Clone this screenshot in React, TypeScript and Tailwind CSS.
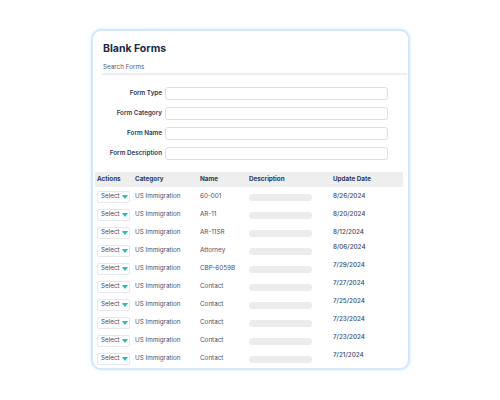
import React from "react";

const rows = [
  { name: "60-001", date: "8/26/2024", up: false },
  { name: "AR-11", date: "8/20/2024", up: false },
  { name: "AR-11SR", date: "8/12/2024", up: false },
  { name: "Attorney", date: "8/06/2024", up: true },
  { name: "CBP-6059B", date: "7/29/2024", up: true },
  { name: "Contact", date: "7/27/2024", up: true },
  { name: "Contact", date: "7/25/2024", up: true },
  { name: "Contact", date: "7/23/2024", up: true },
  { name: "Contact", date: "7/23/2024", up: true },
  { name: "Contact", date: "7/21/2024", up: true },
];

const fields = ["Form Type", "Form Category", "Form Name", "Form Description"];

export default function App() {
  return (
    <div
      className="w-[500px] h-[400px] bg-white pl-[91px] pt-[29px]"
      style={{ fontFamily: "Inter, 'Noto Sans', sans-serif" }}
    >
      <div className="w-[319px] h-[341px] rounded-[10px] border-2 border-[#d3e9fa] bg-white shadow-[0_0_3px_rgba(180,215,245,0.6)] pt-[11px] pr-[1px] flex flex-col">
        <div className="ml-[10px] text-[10.5px] leading-[14px] font-bold text-[#1c2847]">Blank Forms</div>
        <div className="ml-[9px] mt-[7px] pl-[1px] pb-[1px] border-b-2 border-[#eceef1] text-[6.3px] leading-[9px] text-[#4c5a7c]">
          Search Forms
        </div>
        <div className="mt-[12px] flex flex-col gap-[7px]">
          {fields.map((f) => (
            <div key={f} className="flex items-center">
              <div className="w-[69px] text-right text-[6.3px] font-semibold text-[#2f3a56]">{f}</div>
              <div className="ml-[3px] w-[223px] h-[13px] rounded-[3px] border border-[#dcdfe4] bg-white" />
            </div>
          ))}
        </div>
        <div className="mt-[12px] ml-[2px] w-[308px] h-[15px] bg-[#eeeeee] flex items-center text-[6.3px] font-bold text-[#2c3a5c]">
          <div className="w-[40px] pl-[2px]">Actions</div>
          <div className="w-[65px]">Category</div>
          <div className="w-[49px]">Name</div>
          <div className="w-[84px]">Description</div>
          <div>Update Date</div>
        </div>
        <div className="ml-[2px] flex flex-col pt-[1px]">
          {rows.map((r, i) => (
            <div key={i} className="h-[18px] flex items-center text-[6.3px] text-[#46506b]">
              <div className="w-[40px] pl-[2px]">
                <div className="w-[33px] h-[12px] border border-[#e6e8eb] rounded-[2px] flex items-center pl-[3px]">
                  <span className="text-[#3b4563] w-[21px]">Select</span>
                  <svg width="6" height="4" viewBox="0 0 6 4">
                    <path d="M0 0 H6 L3 4 Z" fill="#1fbfa9" />
                  </svg>
                </div>
              </div>
              <div className="w-[65px]">US Immigration</div>
              <div className="w-[49px]">{r.name}</div>
              <div className="w-[84px]">
                <div className="w-[63px] h-[7px] rounded-full bg-[#ececec]" />
              </div>
              <div className={r.up ? "mb-[7px] text-[#3a4768] font-medium" : "text-[#3a4768] font-medium"}>{r.date}</div>
            </div>
          ))}
        </div>
      </div>
    </div>
  );
}
